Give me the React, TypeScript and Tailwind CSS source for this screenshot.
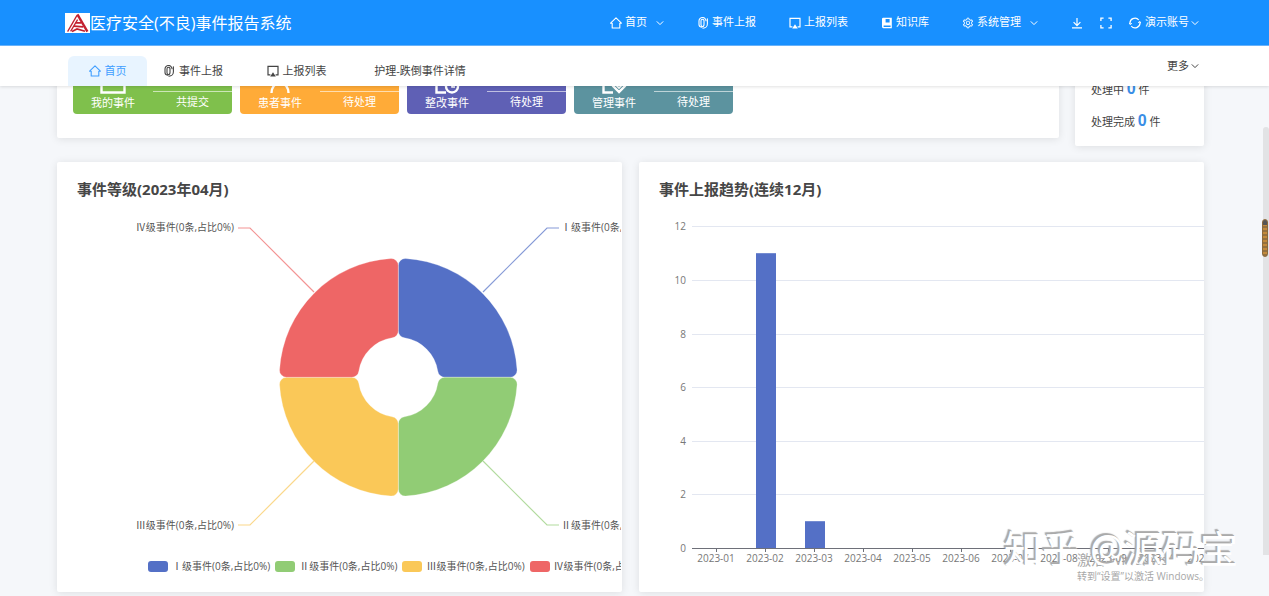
import React from 'react';
import { AiOutlineSetting } from 'react-icons/ai';

type IconProps = { className?: string };

function HomeIcon({ className = '' }: IconProps) {
  return (
    <svg viewBox="0 0 12 12" className={`size-3 shrink-0 ${className}`} fill="none" stroke="currentColor" strokeWidth="1.1" strokeLinejoin="round" aria-hidden="true">
      <path d="M.6 6.200 6 .9 11.400 6.200H9.800V11H2.200V6.200z" />
    </svg>
  );
}

function ClipIcon({ className = '' }: IconProps) {
  return (
    <svg viewBox="0 0 12 12" className={`size-3 shrink-0 ${className}`} fill="none" stroke="currentColor" strokeWidth="1.1" strokeLinecap="round" aria-hidden="true">
      <path d="M5 9.200A1.300 1.300 0 0 1 4 8V3.800a1.500 1.500 0 0 1 3 0v3.800M7 7.600a2.500 2.500 0 0 1-5 0V4.200a3.500 3.500 0 0 1 7-.4M10.400 1.800v5A4.400 4.400 0 0 1 6 11.200" />
    </svg>
  );
}

function BoardIcon({ className = '' }: IconProps) {
  return (
    <svg viewBox="0 0 12 12" className={`size-3 shrink-0 ${className}`} fill="none" stroke="currentColor" strokeWidth="1.2" aria-hidden="true">
      <path d="M3.400 9.800H1V1.400h10v8.400H8.600" />
      <path d="M6 7.200 8.800 11.400H3.200z" fill="currentColor" stroke="none" />
    </svg>
  );
}

function BookIcon({ className = '' }: IconProps) {
  return (
    <svg viewBox="0 0 12 12" className={`size-3 shrink-0 ${className}`} fill="currentColor" fillRule="evenodd" aria-hidden="true">
      <path d="M2.200.8h8.600v10.400H2.400A1.400 1.400 0 0 1 1 9.800V2A1.200 1.200 0 0 1 2.200.8zM4.600 2v3.400h4V2zM2.600 8.600v1.300h7V8.600z" />
    </svg>
  );
}

function DownloadIcon({ className = '' }: IconProps) {
  return (
    <svg viewBox="0 0 12 12" className={`size-3 shrink-0 ${className}`} fill="none" stroke="currentColor" strokeWidth="1.2" aria-hidden="true">
      <path d="M6 1v7.400M2.600 5.200 6 8.600l3.400-3.400M1 10.800h10" />
    </svg>
  );
}

function FullscreenIcon({ className = '' }: IconProps) {
  return (
    <svg viewBox="0 0 12 12" className={`size-3 shrink-0 ${className}`} fill="none" stroke="currentColor" strokeWidth="1.3" aria-hidden="true">
      <path d="M.9 4V1.200h2.700M8.400 1.200h2.700V4M11.100 8v2.800H8.400M3.600 10.800H.9V8" />
    </svg>
  );
}

function RefreshIcon({ className = '' }: IconProps) {
  return (
    <svg viewBox="0 0 12 12" className={`size-3 shrink-0 ${className}`} fill="none" stroke="currentColor" strokeWidth="1.2" aria-hidden="true">
      <path d="M1.200 7.200A4.900 4.900 0 0 1 9.800 3M10.800 4.800A4.900 4.900 0 0 1 2.200 9" />
      <path d="M0 5.600 1.200 7.600 3 6.200M12 6.400 10.800 4.400 9 5.800" strokeWidth="0.9" />
    </svg>
  );
}

function Chevron({ className = '' }: IconProps) {
  return (
    <svg viewBox="0 0 8 8" className={`size-2 shrink-0 ${className}`} fill="none" stroke="currentColor" aria-hidden="true">
      <path d="M.8 2.400 4 5.600l3.200-3.200" />
    </svg>
  );
}

function Logo() {
  return (
    <svg viewBox="0 0 25 20" className="h-5 w-[25px] shrink-0" aria-hidden="true">
      <rect width="25" height="20" fill="#fff" />
      <g fill="none" stroke="#c3202f">
        <path d="M2.600 18.600 12 2.400" strokeWidth="1.3" />
        <path d="M12.400 1.400 22.400 18.600" strokeWidth="2.4" />
        <path d="M5.600 18.400 12.600 6.600" strokeWidth="1.3" />
        <path d="M10.600 9.800h5.600M9 13.200l9.200.6M7 18.400l5-2.400 8 2.200" strokeWidth="1.7" />
      </g>
    </svg>
  );
}

const strokeProps = { fill: 'none', stroke: 'currentColor', strokeWidth: 2.4 } as const;

function InboxGlyph() {
  return (
    <svg viewBox="0 0 26 26" className="size-[26px]" {...strokeProps} aria-hidden="true">
      <path d="M1.500 4v20.500h23V4zM7 10h12M7 16h12" />
    </svg>
  );
}

function PatientGlyph() {
  return (
    <svg viewBox="0 0 26 26" className="size-[26px]" {...strokeProps} aria-hidden="true">
      <circle cx="13" cy="8" r="5.5" />
      <path d="M4.500 25c0-5 3-10 8.500-10s8.500 5 8.500 10" />
    </svg>
  );
}

function FixGlyph() {
  return (
    <svg viewBox="0 0 26 26" className="size-[26px]" {...strokeProps} aria-hidden="true">
      <path d="M12 24.500H2.500V2.500h18V10" />
      <circle cx="18" cy="18.500" r="6" />
      <path d="M18 15.500V19h3" strokeWidth="1.6" />
    </svg>
  );
}

function ManageGlyph() {
  return (
    <svg viewBox="0 0 26 26" className="size-[26px]" {...strokeProps} aria-hidden="true">
      <path d="M12 24.500H2.500V2.500h18V8M18 24l-6-6v-5h12v5z" />
      <path d="m15 17 3 3 4-4" strokeWidth="1.6" />
    </svg>
  );
}

const navItems = [
  { label: '首页', icon: <HomeIcon />, chevron: true },
  { label: '事件上报', icon: <ClipIcon /> },
  { label: '上报列表', icon: <BoardIcon /> },
  { label: '知识库', icon: <BookIcon /> },
  { label: '系统管理', icon: <AiOutlineSetting className="size-3 shrink-0" />, chevron: true },
];

function Header() {
  return (
    <header className="flex h-[46px] shrink-0 items-center border-b border-[#6bb6ff] bg-[#1890ff] pr-[70px] pl-[65px] text-white">
      <div className="flex items-center">
        <Logo />
        <h1 className="text-base whitespace-nowrap">医疗安全(不良)事件报告系统</h1>
      </div>
      <nav className="ml-auto flex items-center gap-[33px] text-[11px] whitespace-nowrap">
        {navItems.map((item) => (
          <a key={item.label} href="#" className="flex items-center gap-[3px]">
            {item.icon}
            {item.label}
            {item.chevron && <Chevron className="ml-[6px]" />}
          </a>
        ))}
      </nav>
      <div className="ml-[33px] flex items-center gap-[17px] text-[11px] whitespace-nowrap">
        <button type="button" aria-label="下载">
          <DownloadIcon />
        </button>
        <button type="button" aria-label="全屏">
          <FullscreenIcon />
        </button>
        <button type="button" className="flex items-center gap-1">
          <RefreshIcon />
          <span className="flex items-center gap-[2px]">
            演示账号
            <Chevron />
          </span>
        </button>
      </div>
    </header>
  );
}

function TabBar() {
  return (
    <div className="relative z-10 flex h-10 shrink-0 items-end bg-white pr-[70px] pl-[68px] text-[11px] whitespace-nowrap text-[#444] shadow-[0_1px_3px_rgba(0,0,0,0.12)]">
      <nav className="flex items-end">
        <a href="#" className="flex h-[30px] w-[79px] items-center justify-center gap-1 rounded-t-md bg-[#e8f4ff] text-[#409eff]">
          <HomeIcon />
          首页
        </a>
        <a href="#" className="flex h-[30px] w-[92px] items-center justify-center gap-1">
          <ClipIcon />
          事件上报
        </a>
        <a href="#" className="flex h-[30px] w-[115px] items-center justify-center gap-1">
          <BoardIcon />
          上报列表
        </a>
        <a href="#" className="flex h-[30px] w-[132px] items-center justify-center">
          护理-跌倒事件详情
        </a>
      </nav>
      <button type="button" className="mb-3 ml-auto flex items-center gap-[2px]">
        更多
        <Chevron />
      </button>
    </div>
  );
}

const stats = [
  { name: '我的事件', state: '共提交', tone: 'bg-[#7fc04c]', icon: <InboxGlyph /> },
  { name: '患者事件', state: '待处理', tone: 'bg-[#ffab38]', icon: <PatientGlyph /> },
  { name: '整改事件', state: '待处理', tone: 'bg-[#5f60b5]', icon: <FixGlyph /> },
  { name: '管理事件', state: '待处理', tone: 'bg-[#5c939f]', icon: <ManageGlyph /> },
];

function StatCard({ name, state, tone, icon }: (typeof stats)[number]) {
  return (
    <a href="#" className={`flex h-20 w-[159px] rounded-[4px] text-white ${tone}`}>
      <div className="flex w-20 flex-col items-center justify-end pb-[2px] text-[11px]">
        {icon}
        <span className="leading-[18px]">{name}</span>
      </div>
      <div className="flex flex-1 flex-col items-center justify-end pb-[3px] text-[11px]">
        <span className="text-xl leading-6">0</span>
        <span className="w-full border-t border-white/60 text-center leading-[19px]">{state}</span>
      </div>
    </a>
  );
}

const panel = 'rounded-xs bg-white shadow-[0_1px_8px_rgba(0,0,0,0.1)]';

function SummaryRow() {
  return (
    <div className="flex items-start gap-4">
      <section className={`flex h-[120px] flex-1 gap-2 px-4 pt-4 ${panel}`}>
        {stats.map((s) => (
          <StatCard key={s.name} {...s} />
        ))}
      </section>
      <section className={`flex h-32 w-[129px] flex-col justify-end px-4 pb-2 text-[11px] text-[#444] ${panel}`}>
        {['待处理', '处理中', '处理完成'].map((label) => (
          <p key={label} className="h-8 leading-8 whitespace-nowrap">
            {label} <b className="font-['Liberation_Sans'] text-base text-[#3a8ee6]">0</b> 件
          </p>
        ))}
      </section>
    </div>
  );
}

const slicePath =
  'M0-111.800A7 7 0 0 1 7.400-118.800A119 119 0 0 1 118.800-7.400A7 7 0 0 1 111.800 0L46.500 0A7 7 0 0 1 39.500-6A40 40 0 0 0 6-39.500A7 7 0 0 1 0-46.500Z';

const levels = [
  { label: 'Ⅰ级事件(0条,占比0%)', color: '#5470c6', swatch: 'bg-[#5470c6]', angle: 0, line: '426,92 490,28 502,28', x: 504, y: 31, anchor: 'start' },
  { label: 'Ⅱ级事件(0条,占比0%)', color: '#91cc75', swatch: 'bg-[#91cc75]', angle: 90, line: '426,261 490,325 502,325', x: 504, y: 329, anchor: 'start' },
  { label: 'Ⅲ级事件(0条,占比0%)', color: '#fac858', swatch: 'bg-[#fac858]', angle: 180, line: '257,261 193,325 181,325', x: 177, y: 329, anchor: 'end' },
  { label: 'Ⅳ级事件(0条,占比0%)', color: '#ee6666', swatch: 'bg-[#ee6666]', angle: 270, line: '257,92 193,28 181,28', x: 177, y: 31, anchor: 'end' },
] as const;

function LevelPanel() {
  return (
    <section className={`h-[430px] min-w-0 overflow-hidden pr-px ${panel}`}>
      <h2 className="px-5 pt-4 text-[15px] leading-[22px] font-bold text-[#464646]">事件等级(2023年04月)</h2>
      <div className="overflow-hidden">
        <svg width="640" height="354" className="block max-w-none" role="img" aria-label="事件等级">
          {levels.map((l) => (
            <g key={l.label}>
              <polyline points={l.line} fill="none" stroke={l.color} strokeOpacity="0.7" strokeWidth="1.2" />
              <path d={slicePath} fill={l.color} stroke="#fff" strokeWidth="0.3" transform={`translate(341.300 177.300) rotate(${l.angle})`} />
              <text x={l.x} y={l.y} textAnchor={l.anchor} className="fill-[#555] text-[10px]">
                {l.label}
              </text>
            </g>
          ))}
        </svg>
      </div>
      <ul className="flex gap-[5px] overflow-hidden pl-[91px] text-[10px] leading-6 whitespace-nowrap text-[#555]">
        {levels.map((l) => (
          <li key={l.label} className="flex shrink-0 items-center gap-1">
            <span className={`h-[11px] w-5 rounded-[3px] ${l.swatch}`} />
            {l.label}
          </li>
        ))}
      </ul>
    </section>
  );
}

const months = ['01', '02', '03', '04', '05', '06', '07', '08', '09', '10', '11'];
const values = [0, 11, 1, 0, 0, 0, 0, 0, 0, 0, 0];

function TrendPanel() {
  const base = 348;
  const unit = 26.8;
  const step = 49;
  return (
    <section className={`h-[430px] min-w-0 overflow-hidden ${panel}`}>
      <h2 className="px-5 pt-4 text-[15px] leading-[22px] font-bold text-[#464646]">事件上报趋势(连续12月)</h2>
      <svg width="640" height="380" className="block max-w-none" role="img" aria-label="事件上报趋势">
        {[0, 2, 4, 6, 8, 10, 12].map((v) => {
          const y = Math.round(base - v * unit) + 0.5;
          return (
            <g key={v}>
              {v > 0 && <line x1="53" x2="640" y1={y} y2={y} stroke="#e3e7f1" />}
              <text x="47" y={y + 3} textAnchor="end" className="fill-[#777] text-[10px]">
                {v}
              </text>
            </g>
          );
        })}
        {months.map((m, i) => (
          <g key={m}>
            {values[i] > 0 && (
              <rect x={117 + (i - 1) * step} y={base - values[i] * unit} width="20" height={values[i] * unit} fill="#5470c6" />
            )}
            <line x1={77.5 + i * step} x2={77.5 + i * step} y1={base} y2={base + 4} stroke="#6e7079" />
            <text x={77 + i * step} y={base + 14} textAnchor="middle" className="fill-[#777] text-[10px]">
              2023-{m}
            </text>
          </g>
        ))}
        <line x1="53" x2="640" y1={base + 0.5} y2={base + 0.5} stroke="#6e7079" />
      </svg>
    </section>
  );
}

function Overlays() {
  return (
    <>
      <div className="pointer-events-none absolute right-[61px] bottom-3 z-20 w-[131px] whitespace-nowrap text-[#a8a8a8]">
        <p className="text-sm leading-4">激活 Windows</p>
        <p className="text-[10px] leading-4">转到“设置”以激活 Windows。</p>
      </div>
      <p className="pointer-events-none absolute right-[31px] bottom-5 z-30 text-[38px] leading-[56px] whitespace-nowrap text-white [text-shadow:-1px_-1px_0_#aaa,-2px_-2px_1px_#aaa]">
        知乎 @源码宝
      </p>
      <div className="absolute top-[127px] right-0 z-20 h-[428px] w-[6px] rounded-t-sm bg-[#e2e3e5]" />
      <div className="absolute top-[219px] right-px z-30 h-[38px] w-[6px] rounded-full border border-[#8b6a3c] bg-[repeating-linear-gradient(#c28a3c_0_2px,#94713f_2px_4px)]">
        <div className="h-[5px] rounded-t-full bg-[#555]" />
      </div>
    </>
  );
}

export default function App() {
  return (
    <div className="relative flex h-screen flex-col overflow-hidden bg-[#f5f7fa] font-['Open_Sans','Noto_Sans_CJK_SC',sans-serif]">
      <Header />
      <TabBar />
      <main className="min-h-0 flex-1 overflow-hidden pr-[65px] pl-[57px]">
        <div className="-mt-[68px] flex flex-col gap-4">
          <SummaryRow />
          <div className="grid grid-cols-2 gap-[17px]">
            <LevelPanel />
            <TrendPanel />
          </div>
        </div>
      </main>
      <Overlays />
    </div>
  );
}
